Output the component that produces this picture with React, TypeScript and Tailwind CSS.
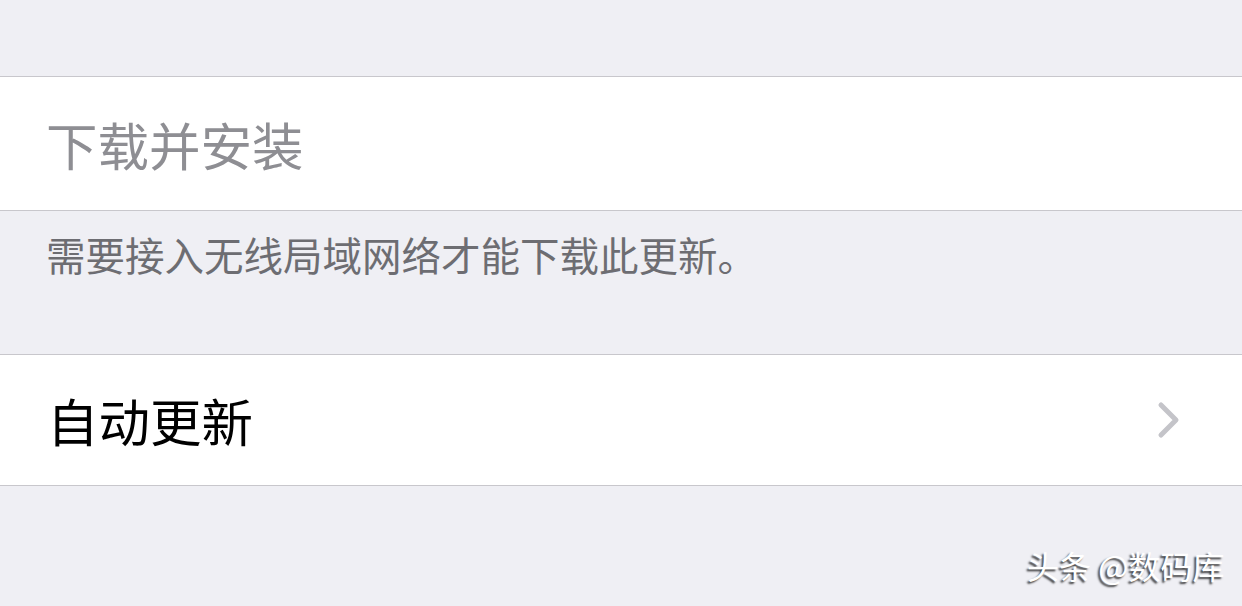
export default function App() {
  return (
    <div
      className="relative w-[1242px] h-[606px] overflow-hidden bg-[#efeff4]"
      style={{ fontFamily: '"Noto Sans CJK SC", "Noto Sans", sans-serif' }}
    >
      <div className="h-[76px]" />
      <div className="h-[135px] bg-white border-y border-[#c8c7cc] flex items-center pl-[46px]">
        <span className="text-[51.5px] leading-none text-[#8e8e93]">下载并安装</span>
      </div>
      <div className="h-[143px] pl-[46px] pt-[23px]">
        <span className="text-[39.5px] leading-none text-[#6d6d72]">需要接入无线局域网络才能下载此更新。</span>
      </div>
      <div className="h-[132px] bg-white border-y border-[#c8c7cc] flex items-center justify-between pl-[47px] pr-[60px]">
        <span className="text-[51.5px] leading-none text-black">自动更新</span>
        <svg width="26" height="40" viewBox="0 0 26 40" fill="none">
          <path d="M5 5 L20 20 L5 35" stroke="#c4c4c9" strokeWidth="5" strokeLinecap="round" strokeLinejoin="round" />
        </svg>
      </div>
      <div
        className="absolute left-[1027px] top-[549px] text-[32px] leading-none text-white"
        style={{ textShadow: '-2px 2px 2px rgba(0,0,0,0.75)' }}
      >
        头条 @数码库
      </div>
    </div>
  )
}
